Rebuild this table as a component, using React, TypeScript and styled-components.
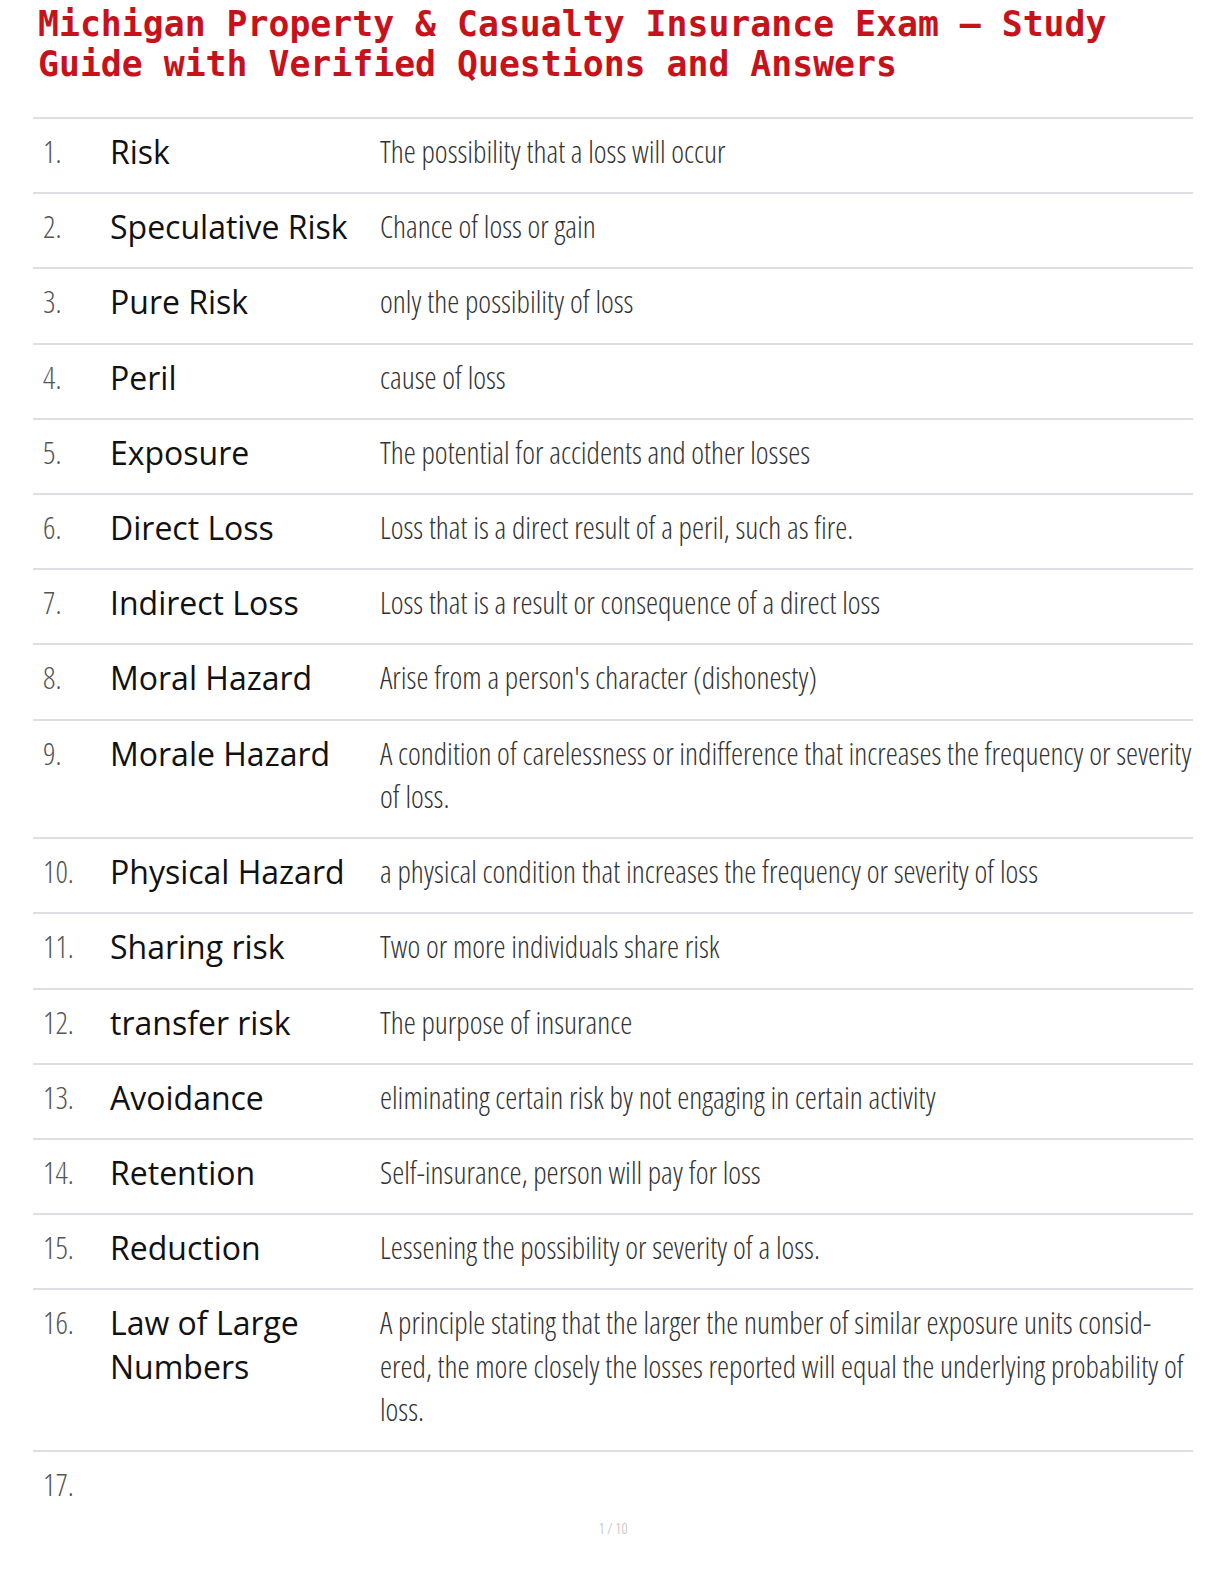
import styled, { createGlobalStyle } from "styled-components"

interface Term {
    term?: string
    explain?: string
}

const terms: Term[] = [
    { term: "Risk", explain: "The possibility that a loss will occur" },
    { term: "Speculative Risk", explain: "Chance of loss or gain" },
    { term: "Pure Risk", explain: "only the possibility of loss" },
    { term: "Peril", explain: "cause of loss" },
    { term: "Exposure", explain: "The potential for accidents and other losses" },
    { term: "Direct Loss", explain: "Loss that is a direct result of a peril, such as fire." },
    { term: "Indirect Loss", explain: "Loss that is a result or consequence of a direct loss" },
    { term: "Moral Hazard", explain: "Arise from a person's character (dishonesty)" },
    {
        term: "Morale Hazard",
        explain:
            "A condition of carelessness or indifference that increases the frequency or severity of loss.",
    },
    {
        term: "Physical Hazard",
        explain: "a physical condition that increases the frequency or severity of loss",
    },
    { term: "Sharing risk", explain: "Two or more individuals share risk" },
    { term: "transfer risk", explain: "The purpose of insurance" },
    { term: "Avoidance", explain: "eliminating certain risk by not engaging in certain activity" },
    { term: "Retention", explain: "Self-insurance, person will pay for loss" },
    { term: "Reduction", explain: "Lessening the possibility or severity of a loss." },
    {
        term: "Law of Large Numbers",
        explain:
            "A principle stating that the larger the number of similar exposure units consid\u00ADered, the more closely the losses reported will equal the underlying probability of loss.",
    },
    {},
]

function App() {
    return (
        <>
            <GlobalStyle />
            <Page>
                <Title>
                    Michigan Property &amp; Casualty Insurance Exam – Study Guide with Verified
                    Questions and Answers
                </Title>

                <List>
                    {terms.map((item, i) => (
                        <Row key={i} last={i === terms.length - 1}>
                            <Num>{i + 1}.</Num>
                            <TermName>{item.term}</TermName>
                            <Explain>{item.explain}</Explain>
                        </Row>
                    ))}
                </List>

                <PageNum>1 / 10</PageNum>
            </Page>
        </>
    )
}

export default App

const GlobalStyle = createGlobalStyle`
    body {
        margin: 0;
        background: #ffffff;
    }
`

const Page = styled.div`
    width: 1224px;
    min-height: 1584px;
    box-sizing: border-box;
    padding: 5px 31px 0 33px;
    display: flex;
    flex-direction: column;
`

const Title = styled.h1`
    margin: 0 0 33px 5px;
    width: 1120px;
    font-family: "DejaVu Sans Mono", "Liberation Mono", monospace;
    font-weight: bold;
    font-size: 34.8px;
    line-height: 39.5px;
    color: #c8121b;
`

const List = styled.div`
    display: flex;
    flex-direction: column;
    border-top: 2px solid #dedee4;
`

const Row = styled.div<{ last?: boolean }>`
    display: grid;
    grid-template-columns: 67px 270px 1fr;
    padding: 11px 0 ${(p) => (p.last ? "0" : "18.8px")} 10px;
    border-bottom: ${(p) => (p.last ? "none" : "2px solid #dedee4")};
    line-height: 43.4px;
`

const Num = styled.div`
    font-family: "Open Sans", "Noto Sans", sans-serif;
    font-weight: 300;
    font-stretch: 75%;
    font-size: 30.5px;
    color: #555555;
`

const TermName = styled.div`
    font-family: "Open Sans", "Noto Sans", sans-serif;
    font-weight: 500;
    font-size: 32px;
    color: #111111;
`

const Explain = styled.div`
    font-family: "Open Sans", "Noto Sans", sans-serif;
    font-weight: 300;
    font-stretch: 75%;
    font-size: 30.5px;
    color: #333333;
`

const PageNum = styled.div`
    margin-top: 11px;
    text-align: center;
    font-family: "Open Sans", "Noto Sans", sans-serif;
    font-weight: 300;
    font-stretch: 75%;
    font-size: 15px;
    line-height: 20px;
    color: #b5b5b5;
`
